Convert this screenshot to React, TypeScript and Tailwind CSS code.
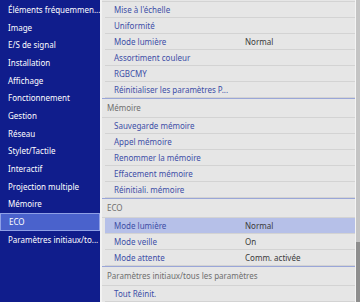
const leftItems = [
  "Éléments fréquemmen...",
  "Image",
  "E/S de signal",
  "Installation",
  "Affichage",
  "Fonctionnement",
  "Gestion",
  "Réseau",
  "Stylet/Tactile",
  "Interactif",
  "Projection multiple",
  "Mémoire",
  "ECO",
  "Paramètres initiaux/to...",
];

interface Row {
  label: string;
  value?: string;
  active?: boolean;
}

interface Section {
  title?: string;
  rows: Row[];
}

const sections: Section[] = [
  {
    rows: [
      { label: "Mise à l'échelle" },
      { label: "Uniformité" },
      { label: "Mode lumière", value: "Normal" },
      { label: "Assortiment couleur" },
      { label: "RGBCMY" },
      { label: "Réinitialiser les paramètres P..." },
    ],
  },
  {
    title: "Mémoire",
    rows: [
      { label: "Sauvegarde mémoire" },
      { label: "Appel mémoire" },
      { label: "Renommer la mémoire" },
      { label: "Effacement mémoire" },
      { label: "Réinitiali. mémoire" },
    ],
  },
  {
    title: "ECO",
    rows: [
      { label: "Mode lumière", value: "Normal", active: true },
      { label: "Mode veille", value: "On" },
      { label: "Mode attente", value: "Comm. activée" },
    ],
  },
  {
    title: "Paramètres initiaux/tous les paramètres",
    rows: [{ label: "Tout Réinit." }],
  },
];

const ItemRow = ({ label, value, active }: Row) => (
  <div
    className={`ml-[3px] h-[16px] flex items-center border-b border-[#d3d3d3] ${
      active ? "bg-[#b6c0e8]" : ""
    }`}
  >
    <div className="w-[140px] pl-[9px] text-[#3d4ea6] whitespace-nowrap">{label}</div>
    {value && <div className="text-[#3a3a3a] whitespace-nowrap">{value}</div>}
  </div>
);

export default function App() {
  return (
    <div className="w-[360px] h-[302px] flex bg-[#e6e6e6] overflow-hidden text-[8px] leading-none font-['Noto_Sans',sans-serif]">
      <div className="w-[100px] shrink-0 bg-[#101d8c] pt-[1px] flex flex-col">
        {leftItems.map((item) => (
          <div
            key={item}
            className={`h-[17.7px] flex items-center pl-[8px] text-white whitespace-nowrap ${
              item === "ECO"
                ? "bg-[#4a62cc] border border-[#8fa0e6] pl-[7px]"
                : ""
            }`}
          >
            {item}
          </div>
        ))}
      </div>
      <div className="w-[2px] bg-[#f2f2f2]" />
      <div className="flex-1 flex flex-col">
        {sections.map((s, i) => (
          <div key={i} className="border-b border-[#9aa6d8]">
            {s.title ? (
              <div className="h-[19px] flex items-center pl-[5px] text-[#6e6e6e] border-b border-[#d3d3d3] whitespace-nowrap">
                {s.title}
              </div>
            ) : (
              <div className="h-[2px] border-b border-[#d3d3d3]" />
            )}
            {s.rows.map((r, j) => (
              <ItemRow key={j} {...r} />
            ))}
          </div>
        ))}
      </div>
      <div className="w-[1px] bg-[#f4f4f4]" />
      <div className="w-[4px] bg-[#c4c4c4] flex flex-col justify-end">
        <div className="h-[60px] bg-[#8e8e8e]" />
      </div>
    </div>
  );
}
